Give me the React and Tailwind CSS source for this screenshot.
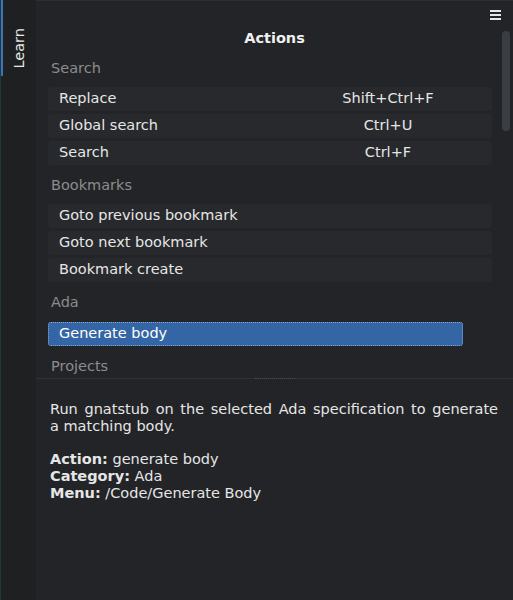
import React from 'react';

const sections = [
  {
    title: 'Search',
    rows: [
      { name: 'Replace', key: 'Shift+Ctrl+F' },
      { name: 'Global search', key: 'Ctrl+U' },
      { name: 'Search', key: 'Ctrl+F' },
    ],
  },
  {
    title: 'Bookmarks',
    rows: [
      { name: 'Goto previous bookmark' },
      { name: 'Goto next bookmark' },
      { name: 'Bookmark create' },
    ],
  },
  {
    title: 'Ada',
    rows: [{ name: 'Generate body', selected: true }],
  },
  { title: 'Projects', rows: [] },
];

function Row({ row }) {
  if (row.selected) {
    return (
      <div className="h-[24px] w-[415px] shrink-0 mt-[1px] flex items-center pl-[10px] bg-[#3465a4] border border-dotted border-[#86a9d8] rounded-[3px] text-white">
        {row.name}
      </div>
    );
  }
  return (
    <div className="h-[24px] w-[444px] shrink-0 flex items-center pl-[11px] bg-[#27292c] rounded-[3px]">
      <span className="flex-1">{row.name}</span>
      {row.key && <span className="w-[140px] mr-[34px] text-center">{row.key}</span>}
    </div>
  );
}

export default function App() {
  return (
    <div className="w-[513px] h-[600px] flex overflow-hidden bg-[#232427] text-[#e6e6e6] text-[14.5px] font-['DejaVu_Sans',sans-serif]">
      {/* tab bar */}
      <div className="w-[36px] shrink-0 flex flex-col bg-[#1f2022] border-l border-[#1d3a3a]">
        <div className="h-[76px] pt-[20px] border-l-[2px] border-[#3d72b8] flex items-center justify-center">
          <span className="[writing-mode:vertical-rl] rotate-180 leading-none text-[#e8e8e8]">Learn</span>
        </div>
      </div>

      {/* main */}
      <div className="flex-1 flex flex-col border-t border-[#2c2e31]">
        <div className="h-[377px] shrink-0 relative flex flex-col overflow-hidden">
          <div className="h-[27px] shrink-0 flex justify-end items-start pt-[9px] pr-[12px]">
            <svg width="11" height="10" viewBox="0 0 11 10" className="text-[#e6e6e6]">
              <rect x="0" y="0" width="11" height="2" fill="currentColor" />
              <rect x="0" y="4" width="11" height="2" fill="currentColor" />
              <rect x="0" y="8" width="11" height="2" fill="currentColor" />
            </svg>
          </div>
          <div className="h-[20px] shrink-0 leading-[20px] text-center font-bold text-[#f0f0f0]">Actions</div>

          <div className="pl-[12px] mt-[1px] shrink-0 flex flex-col">
            {sections.map((s, i) => (
              <div key={s.title} className={i === 0 ? 'shrink-0 mt-[9px]' : 'shrink-0 mt-[10px]'}>
                <div className="h-[20px] leading-[20px] pl-[3px] mb-[9px] text-[#8c8c8c]">{s.title}</div>
                <div className="flex flex-col gap-[3px]">
                  {s.rows.map((r) => (
                    <Row key={r.name} row={r} />
                  ))}
                </div>
              </div>
            ))}
          </div>

          {/* overlay scrollbar */}
          <div className="absolute right-[3px] top-[30px] w-[8px] h-[100px] rounded-full bg-[#3a3e43]" />
        </div>

        <div className="h-[1px] shrink-0 bg-[#2f3135] flex justify-center">
          <div className="w-[40px] h-[1px] border-t border-dotted border-[#4a4d52]" />
        </div>

        <div className="pl-[14px] pr-[15px] pt-[22px] leading-[17px] text-[#e6e6e6]">
          <p className="text-justify [text-align-last:justify]">
            Run gnatstub on the selected Ada specification to generate
          </p>
          <p>a matching body.</p>
          <p className="mt-[16px]">
            <b>Action:</b> generate body
          </p>
          <p>
            <b>Category:</b> Ada
          </p>
          <p>
            <b>Menu:</b> /Code/Generate Body
          </p>
        </div>
      </div>
    </div>
  );
}
